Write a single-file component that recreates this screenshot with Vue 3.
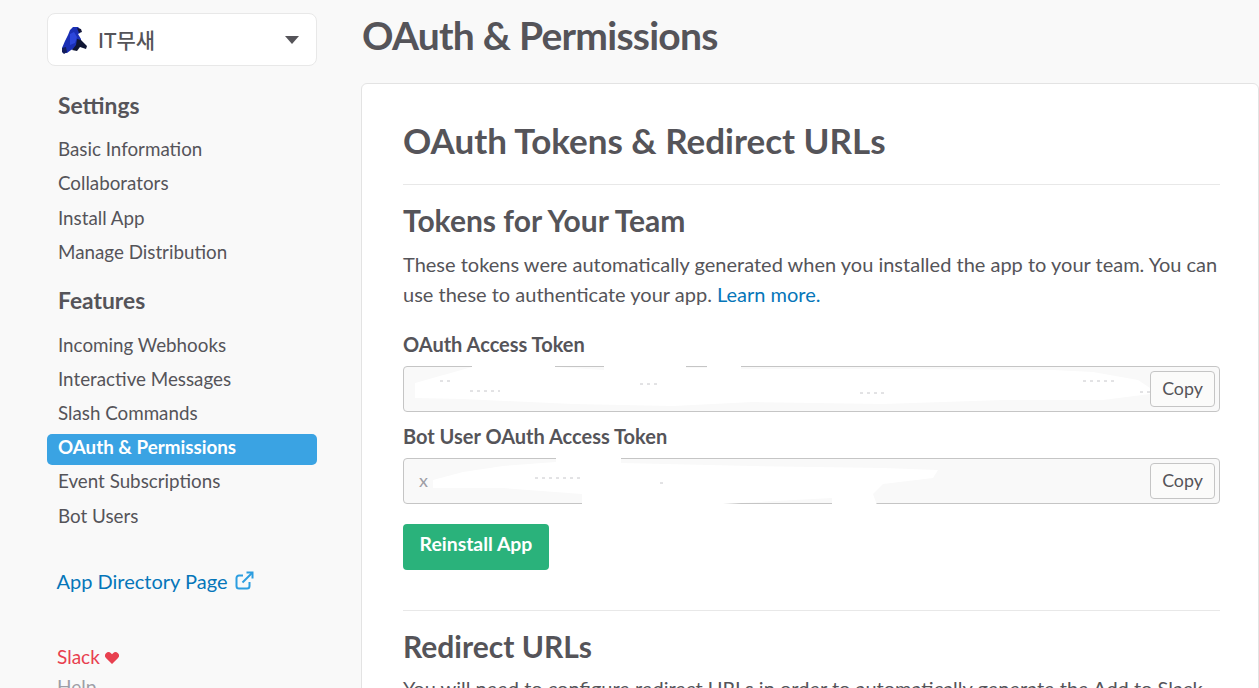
<template>
  <div class="page">
    <aside class="sidebar">
      <div class="team-select">
        <svg class="team-icon" width="25" height="28" viewBox="0 0 25 28">
          <path d="M11 1 L16 1 L19 4 L18 7 L16 8 L19 13 L19 18 L14 22 L9 24 L5 27 L1 27 L0 22 L3 15 L6 9 L8 4 Z" fill="#1a2fb5" />
          <path d="M15 13 L19 14 L25 20 L24 23 L18 21 L15 25 L10 24 L14 19 Z" fill="#101633" />
          <path d="M15 2 L19 3 L20 6 L17 7 Z" fill="#15183a" />
          <path d="M0 22 L4 21 L5 26 L2 28 L0 26 Z" fill="#131d5c" />
          <path d="M8 8 L12 6 L15 11 L13 17 L8 19 Z" fill="#2c46dc" />
        </svg>
        <span class="team-name">IT무새</span>
        <span class="caret"></span>
      </div>

      <h3 class="nav-title first">Settings</h3>
      <a v-for="item in settings" :key="item" class="nav-item">{{ item }}</a>

      <h3 class="nav-title">Features</h3>
      <a
        v-for="item in features"
        :key="item"
        class="nav-item"
        :class="{ active: item === 'OAuth & Permissions' }"
      >{{ item }}</a>

      <a class="directory">
        App Directory Page
        <svg width="19" height="19" viewBox="0 0 19 19" fill="none" stroke="#2d9ee0" stroke-width="2">
          <path d="M14.5 11 V15 a2.5 2.5 0 0 1 -2.5 2.5 H4 a2.5 2.5 0 0 1 -2.5 -2.5 V7 A2.5 2.5 0 0 1 4 4.5 H8" />
          <path d="M7.5 11.5 L17 2" />
          <path d="M11.5 1.5 H17.5 V7.5" />
        </svg>
      </a>

      <div class="slack">
        Slack
        <svg class="heart" width="14" height="12" viewBox="0 0 15 13">
          <path d="M7.5 13 L1.2 6.8 A3.7 3.7 0 0 1 6.4 1.3 L7.5 2.4 L8.6 1.3 A3.7 3.7 0 0 1 13.8 6.8 Z" fill="#e8404f" />
        </svg>
      </div>
      <div class="help">Help</div>
    </aside>

    <main class="main">
      <h1 class="page-title">OAuth &amp; Permissions</h1>
      <section class="card">
        <h2 class="card-title">OAuth Tokens &amp; Redirect URLs</h2>
        <hr class="rule" />
        <h3 class="section-title">Tokens for Your Team</h3>
        <p class="copy">
          These tokens were automatically generated when you installed the app to your team. You can
          use these to authenticate your app. <a class="link">Learn more.</a>
        </p>

        <label class="token-label first">OAuth Access Token</label>
        <div class="token-field">
          <svg class="scribble" viewBox="0 0 817 46">
            <path d="M12 17 L69 1 L69 -1 L152 -1 L152 1 L201 4 L201 -1 L283 -1 L283 2 L304 2 L304 -1 L338 -1 L338 3 L500 3 L650 4 L690 6 L735 14 L747 22 L747 28 L700 34 L600 34 L480 38 L350 36 L270 40 L170 38 L60 33 L12 32 Z" fill="#fff" />
            <path d="M680 15 h34 M737 26 h10 M457 27 h26 M237 18 h20 M37 15 h10 M67 25 h30" stroke="#c6c6ca" stroke-width="1" stroke-dasharray="3 4" fill="none" />
          </svg>
          <button class="copy-btn">Copy</button>
        </div>

        <label class="token-label">Bot User OAuth Access Token</label>
        <div class="token-field">
          <span class="token-text">x</span>
          <svg class="scribble" viewBox="0 0 817 46">
            <path d="M30 22 L60 14 L100 8 L153 4 L153 -1 L218 -1 L218 5 L350 8 L480 10 L535 12 L530 20 L480 26 L470 36 L474 47 L429 47 L429 40 L320 46 L244 47 L179 47 L179 36 L100 30 L30 30 Z" fill="#fff" />
            <path d="M132 20 h45 M257 25 h6" stroke="#c6c6ca" stroke-width="1" stroke-dasharray="3 4" fill="none" />
          </svg>
          <button class="copy-btn">Copy</button>
        </div>

        <button class="reinstall">Reinstall App</button>
        <hr class="rule lower" />
        <h3 class="section-title redirect">Redirect URLs</h3>
        <p class="copy tail">You will need to configure redirect URLs in order to automatically generate the Add to Slack button for your app.</p>
      </section>
    </main>
  </div>
</template>

<script setup>
const settings = ["Basic Information", "Collaborators", "Install App", "Manage Distribution"];
const features = [
  "Incoming Webhooks",
  "Interactive Messages",
  "Slash Commands",
  "OAuth & Permissions",
  "Event Subscriptions",
  "Bot Users",
];
</script>

<style>
html,
body {
  margin: 0;
  height: 100%;
  overflow: hidden;
  background: #f9f9f9;
}
</style>

<style scoped>
.page {
  display: flex;
  height: 688px;
  overflow: hidden;
  font-family: Lato, "Noto Sans CJK KR", sans-serif;
  color: #555459;
  background: #f9f9f9;
}
.sidebar {
  flex: 0 0 361px;
  box-sizing: border-box;
  padding: 13px 44px 0 47px;
  display: flex;
  flex-direction: column;
  align-items: stretch;
}
.sidebar > * {
  flex: none;
}
.team-select {
  height: 53px;
  box-sizing: border-box;
  display: flex;
  align-items: center;
  padding: 0 17px 0 14px;
  background: #fff;
  border: 1px solid #e8e8e8;
  border-radius: 8px;
}
.team-icon {
  margin-right: 11px;
}
.team-name {
  flex: 1;
  font-size: 21px;
  font-weight: 500;
  margin-top: -2px;
}
.caret {
  width: 0;
  height: 0;
  border-left: 7px solid transparent;
  border-right: 7px solid transparent;
  border-top: 8px solid #555459;
}
.nav-title {
  margin: 10px 0 4px 11px;
  height: 44px;
  line-height: 41px;
  font-size: 22.8px;
  font-weight: 700;
}
.nav-title.first {
  margin-top: 18px;
  line-height: 43px;
}
.nav-item {
  display: block;
  height: 34.4px;
  line-height: 34px;
  padding-left: 11px;
  font-size: 18.8px;
}
.nav-item.active {
  height: 31px;
  line-height: 26px;
  margin: 3.2px 0 -0.8px;
  border-radius: 5px;
  background: #3aa3e3;
  color: #fff;
  font-weight: 700;
}
.directory {
  display: flex;
  align-items: center;
  gap: 8px;
  margin: 33px 0 0 9.5px;
  height: 30px;
  font-size: 20px;
  color: #0576b9;
}
.slack {
  display: flex;
  align-items: center;
  gap: 5px;
  margin: 46px 0 0 10px;
  height: 30px;
  font-size: 19px;
  color: #e8404f;
}
.heart {
  margin-top: 2px;
}
.help {
  margin: 3px 0 0 10px;
  font-size: 19px;
  color: #9e9ea6;
}
.main {
  flex: 1;
  min-width: 0;
}
.page-title {
  margin: 0 0 0 1px;
  height: 83px;
  box-sizing: border-box;
  padding-top: 11px;
  line-height: 48px;
  font-size: 39px;
  font-weight: 700;
  letter-spacing: -0.75px;
}
.card {
  box-sizing: border-box;
  height: 700px;
  padding: 34px 38px 0 41px;
  background: #fff;
  border: 1px solid #e3e3e3;
  border-radius: 6px 6px 0 0;
}
.card-title {
  margin: 0;
  height: 66px;
  line-height: 44px;
  font-size: 35px;
  font-weight: 700;
}
.rule {
  margin: 0;
  border: 0;
  border-top: 1px solid #e8e8e8;
}
.section-title {
  margin: 16px 0 0;
  height: 40px;
  line-height: 38px;
  font-size: 30px;
  font-weight: 700;
}
.copy {
  margin: 8px 0 0;
  font-size: 20px;
  line-height: 30px;
}
.link {
  color: #0576b9;
}
.token-label {
  display: block;
  height: 30px;
  line-height: 28px;
  font-size: 20px;
  font-weight: 700;
  margin-top: 10px;
}
.token-label.first {
  margin-top: 21px;
}
.token-field {
  position: relative;
  height: 46px;
  box-sizing: border-box;
  display: flex;
  align-items: center;
  justify-content: flex-end;
  padding: 0 4px 0 15px;
  background: #f9f9f9;
  border: 1px solid #c5c5c5;
  border-radius: 4px;
  margin-top: 6px;
}
.token-text {
  position: absolute;
  left: 15px;
  top: 10px;
  font-size: 18px;
  color: #9e9ea6;
}
.scribble {
  position: absolute;
  left: -1px;
  top: -1px;
  width: 817px;
  height: 46px;
  overflow: visible;
}
.copy-btn {
  position: relative;
  width: 65px;
  height: 36px;
  padding: 0 0 2px;
  font-family: inherit;
  font-size: 17.8px;
  color: #555459;
  background: #fbfbfa;
  border: 1px solid #c5c5c5;
  border-radius: 4px;
}
.reinstall {
  display: block;
  margin-top: 20px;
  width: 146px;
  height: 46px;
  padding: 0 0 7px;
  font-family: inherit;
  font-size: 19.4px;
  font-weight: 700;
  color: #fff;
  background: #2ab27b;
  border: 0;
  border-radius: 4px;
}
.rule.lower {
  margin-top: 40px;
}
.section-title.redirect {
  margin-top: 16px;
}
.copy.tail {
  margin-top: 6px;
}
</style>
